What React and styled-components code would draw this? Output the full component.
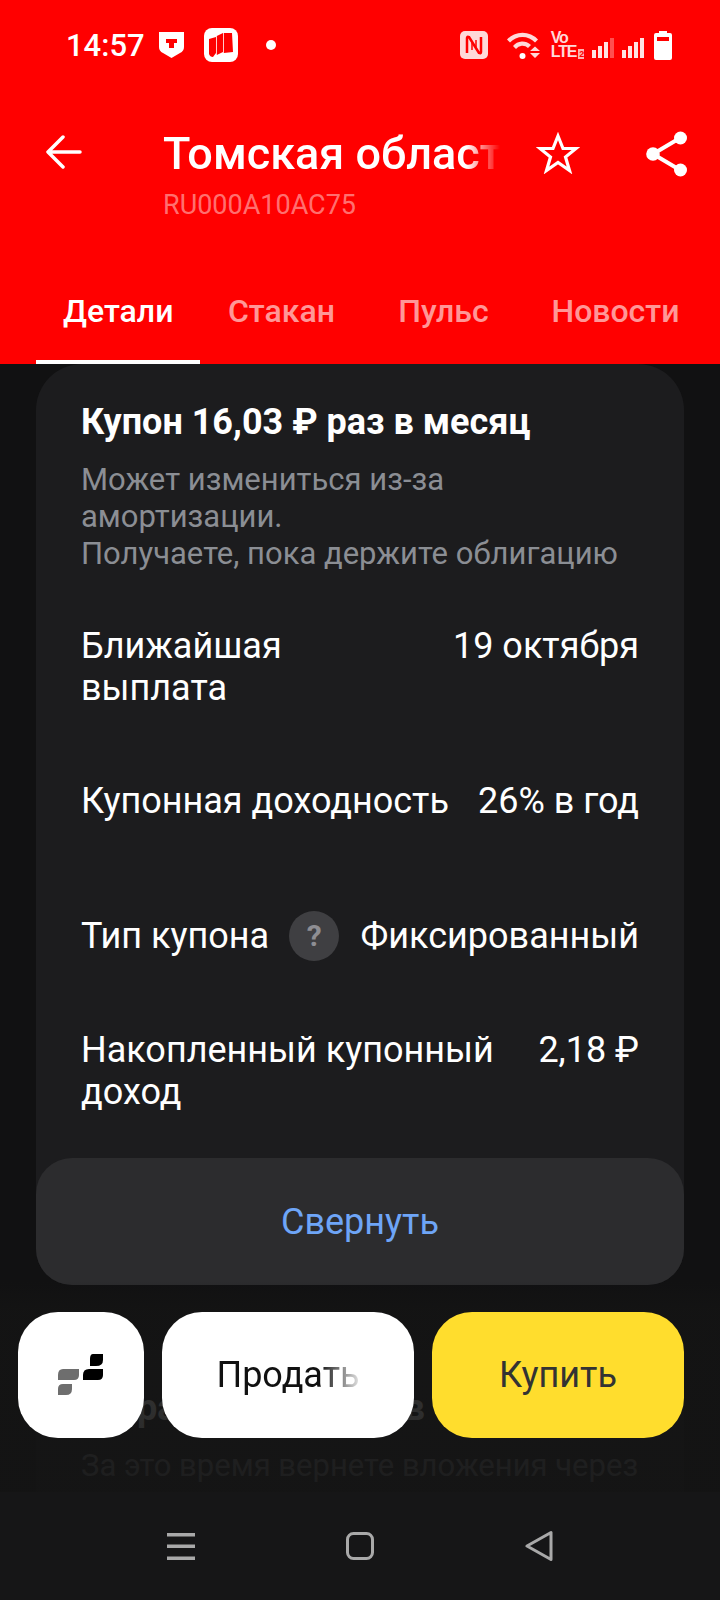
import React from "react";
import styled, { createGlobalStyle } from "styled-components";

const GlobalStyle = createGlobalStyle`
    html, body {
        margin: 0;
        padding: 0;
        background: #111112;
        font-family: Roboto, "Liberation Sans", sans-serif;
    }
`;

const Signal = ({ dim }) => (
    <svg width="22" height="20" viewBox="0 0 22 20" style={{ marginLeft: 8, marginTop: 6 }}>
        <rect x="0" y="12" width="4" height="8" fill="#ffe3e3" />
        <rect x="6" y="8" width="4" height="12" fill="#ffe3e3" />
        <rect x="12" y="4" width="4" height="16" fill="#ffe3e3" />
        <rect x="18" y="0" width="4" height="20" fill={dim ? "#ff5050" : "#ffe3e3"} />
    </svg>
);

const App = () => {
    return (
        <Page>
            <GlobalStyle />
            <Header>
                <StatusBar>
                    <Time>14:57</Time>
                    <svg width="25" height="26" viewBox="0 0 25 26" style={{ marginLeft: 14 }}>
                        <path d="M0 0H25V15Q25 19 21 21L12.5 26L4 21Q0 19 0 15Z" fill="#fff" />
                        <path d="M7 7H18V11H15V16H10V11H7Z" fill="#f00" />
                    </svg>
                    <svg width="34" height="34" viewBox="0 0 34 34" style={{ marginLeft: 20 }}>
                        <rect width="34" height="34" rx="8" fill="#fff" />
                        <path d="M5 11L12 9V25L9 29Q6 29 5 26ZM12.800 8L19 5V24L12.800 27ZM19.800 5H28L29 24L19.800 25Z" fill="#f00" />
                    </svg>
                    <StatusDot />
                    <StatusIcons>
                        <svg width="28" height="28" viewBox="0 0 28 28">
                            <rect width="28" height="28" rx="5" fill="#ffd9d9" />
                            <path d="M7 22V7Q7 5 9 6L19 22Q21 23 21 21V6" fill="none" stroke="#f00" strokeWidth="2.500" />
                            <path d="M12 12V19M16 9V16" stroke="#f00" strokeWidth="1.500" />
                        </svg>
                        <svg width="34" height="28" viewBox="0 0 34 28" style={{ marginLeft: 18 }}>
                            <path d="M1 8.500A21 21 0 0 1 32 8.500L29 11.500A17 17 0 0 0 4 11.500Z" fill="#ffd9d9" />
                            <path d="M7 15A12 12 0 0 1 25 14L22 17A8 8 0 0 0 10 18Z" fill="#ffd9d9" />
                            <circle cx="16.500" cy="25" r="3" fill="#fff" />
                            <path d="M24 20L29 15.500L34 20ZM24 22H34L29 27Z" fill="#ffd9d9" />
                        </svg>
                        <VoLte>
                            <VoLine>Vo</VoLine>
                            <VoLine>LTE<SimBox>2</SimBox></VoLine>
                        </VoLte>
                        <Signal dim />
                        <Signal />
                        <svg width="18" height="29" viewBox="0 0 18 29" style={{ marginLeft: 10 }}>
                            <path d="M5 0H13V2H16Q18 2 18 4V27Q18 29 16 29H2Q0 29 0 27V4Q0 2 2 2H5Z" fill="#fff" />
                            <rect x="3" y="6" width="12" height="4" fill="#f00" />
                        </svg>
                    </StatusIcons>
                </StatusBar>
                <Toolbar>
                    <svg width="36" height="36" viewBox="0 0 36 36" fill="none" stroke="#fff" strokeWidth="3.500" strokeLinecap="round" strokeLinejoin="round" style={{ marginTop: 3 }}>
                        <path d="M34 18H3M17 3L2 18L17 33" />
                    </svg>
                    <TitleBlock>
                        <Title>Томская область</Title>
                        <Isin>RU000A10AC75</Isin>
                    </TitleBlock>
                    <svg width="44" height="42" viewBox="0 0 44 42" fill="none" stroke="#fff" strokeWidth="3.200" strokeLinejoin="miter" style={{ marginLeft: 36, marginTop: 1 }}>
                        <path d="M22 4L27 16.500H40L29.500 25L33.500 38.500L22 30.500L10.500 38.500L14.500 25L4 16.500H17Z" />
                    </svg>
                    <svg width="42" height="46" viewBox="0 0 42 46" style={{ marginLeft: 66 }}>
                        <path d="M34 7L7 23L34 39" fill="none" stroke="#fff" strokeWidth="4" />
                        <circle cx="34.500" cy="7" r="6.500" fill="#fff" />
                        <circle cx="7" cy="23" r="6.800" fill="#fff" />
                        <circle cx="34.500" cy="39" r="6.500" fill="#fff" />
                    </svg>
                </Toolbar>
                <Tabs>
                    <Tab $active>Детали</Tab>
                    <Tab>Стакан</Tab>
                    <Tab>Пульс</Tab>
                    <Tab>Новости</Tab>
                </Tabs>
            </Header>

            <Content>
                <Card>
                    <CardBody>
                        <CardTitle>Купон 16,03 ₽ раз в месяц</CardTitle>
                        <Note>
                            Может измениться из-за<br />
                            амортизации.<br />
                            Получаете, пока держите облигацию
                        </Note>
                        <Rows>
                            <Row>
                                <span>Ближайшая<br />выплата</span>
                                <Value>19 октября</Value>
                            </Row>
                            <Row $tall>
                                <span>Купонная доходность</span>
                                <Value>26% в год</Value>
                            </Row>
                            <Row $center>
                                <Label>
                                    Тип купона
                                    <Help>?</Help>
                                </Label>
                                <Value>Фиксированный</Value>
                            </Row>
                            <Row>
                                <span>Накопленный купонный<br />доход</span>
                                <Value>2,18 ₽</Value>
                            </Row>
                        </Rows>
                    </CardBody>
                    <Collapse>Свернуть</Collapse>
                </Card>
                <NextCard>
                    <CardTitle>Дюрация 8 месяцев</CardTitle>
                    <Note>За это время вернете вложения через</Note>
                </NextCard>
                <Fade />
                <Actions>
                    <LogoButton>
                        <svg width="46" height="42" viewBox="0 0 46 42">
                            <path d="M35 0H45V6Q45 12 38 12H32V5Q32 0 35 0Z" fill="#000" />
                            <path d="M31 15H45V21Q45 26 40 26H25V21Q25 15 31 15Z" fill="#000" />
                            <path d="M5 15H21V21Q21 26 16 26H0V21Q0 15 5 15Z" fill="#6e6e6e" />
                            <path d="M5 30H14V35Q14 41 8 41H0V35Q0 30 5 30Z" fill="#6e6e6e" />
                        </svg>
                    </LogoButton>
                    <SellButton><FadeText>Продать</FadeText></SellButton>
                    <BuyButton>Купить</BuyButton>
                </Actions>
            </Content>

            <NavBar>
                <svg width="28" height="27" viewBox="0 0 28 27" fill="#a9a9a9">
                    <rect y="0" width="28" height="3.500" />
                    <rect y="11.500" width="28" height="3.500" />
                    <rect y="23.500" width="28" height="3.500" />
                </svg>
                <svg width="28" height="28" viewBox="0 0 28 28" fill="none" stroke="#a9a9a9" strokeWidth="3">
                    <rect x="1.500" y="1.500" width="25" height="25" rx="6" />
                </svg>
                <svg width="28" height="32" viewBox="0 0 28 32" fill="none" stroke="#a9a9a9" strokeWidth="3" strokeLinejoin="round">
                    <path d="M26 2.500V29.500L2 16Z" />
                </svg>
            </NavBar>
        </Page>
    );
};
export default App;

const Page = styled.div`
    display: flex;
    flex-direction: column;
    width: 720px;
    height: 1600px;
    overflow: hidden;
    background: #111112;
`;

const Header = styled.div`
    display: flex;
    flex-direction: column;
    height: 364px;
    background: #ff0000;
    color: #fff;
`;

const StatusBar = styled.div`
    display: flex;
    align-items: center;
    height: 90px;
    padding-left: 66px;
`;

const Time = styled.div`
    font-size: 31px;
    font-weight: 500;
`;

const StatusDot = styled.div`
    width: 10px;
    height: 10px;
    margin-left: 28px;
    border-radius: 50%;
    background: #fff;
`;

const StatusIcons = styled.div`
    display: flex;
    align-items: center;
    margin-left: auto;
    margin-right: 48px;
`;

const VoLte = styled.div`
    display: flex;
    flex-direction: column;
    margin-left: 11px;
    color: #ffd9d9;
    font-family: "Liberation Sans", sans-serif;
    font-size: 16px;
    font-weight: 700;
    line-height: 14px;
`;

const VoLine = styled.div`
    display: flex;
    align-items: flex-end;
    letter-spacing: -1.2px;
`;

const SimBox = styled.span`
    margin-left: 2px;
    padding: 0 1px;
    background: #ffb3b3;
    color: #f00;
    font-size: 9px;
    line-height: 10px;
`;

const Toolbar = styled.div`
    display: flex;
    align-items: flex-start;
    height: 194px;
    padding: 41px 0 0 46px;
    box-sizing: border-box;
`;

const TitleBlock = styled.div`
    display: flex;
    flex-direction: column;
    width: 337px;
    margin-left: 81px;
    margin-top: -2px;
    overflow: hidden;
`;

const Title = styled.div`
    font-size: 45px;
    font-weight: 500;
    line-height: 50px;
    white-space: nowrap;
    mask-image: linear-gradient(to right, #000 90%, transparent 100%);
`;

const Isin = styled.div`
    margin-top: 10px;
    font-size: 27px;
    line-height: 32px;
    color: rgba(255, 255, 255, 0.45);
`;

const Tabs = styled.div`
    display: flex;
    height: 80px;
    padding-left: 36px;
`;

const Tab = styled.div`
    display: flex;
    justify-content: center;
    box-sizing: border-box;
    min-width: 162px;
    padding: 7px 27px 0;
    font-size: 32px;
    font-weight: 500;
    line-height: 40px;
    white-space: nowrap;
    color: ${(p) => (p.$active ? "#fff" : "rgba(255, 255, 255, 0.6)")};
    border-bottom: 4px solid ${(p) => (p.$active ? "#fff" : "transparent")};
`;

const Content = styled.div`
    position: relative;
    flex: 1;
    min-height: 0;
    overflow: hidden;
    padding: 0 36px;
`;

const Card = styled.div`
    display: flex;
    flex-direction: column;
    height: 921px;
    border-radius: 46px 46px 36px 36px;
    background: #1c1c1e;
`;

const CardBody = styled.div`
    flex: 1;
    padding: 39px 45px 0;
    color: #fff;
`;

const CardTitle = styled.div`
    font-size: 36px;
    font-weight: 700;
    line-height: 38px;
    color: #fff;
`;

const Note = styled.div`
    margin-top: 20px;
    font-size: 31px;
    line-height: 37px;
    color: #8b8e94;
`;

const Rows = styled.div`
    display: flex;
    flex-direction: column;
    gap: 71px;
    margin-top: 53px;
`;

const Row = styled.div`
    display: flex;
    justify-content: space-between;
    align-items: ${(p) => (p.$center ? "center" : "flex-start")};
    min-height: ${(p) => (p.$tall ? "63px" : "42px")};
    font-size: 36px;
    line-height: 42px;
    color: #fff;
`;

const Value = styled.span`
    white-space: nowrap;
`;

const Label = styled.span`
    display: flex;
    align-items: center;
    gap: 20px;
`;

const Help = styled.span`
    display: flex;
    align-items: center;
    justify-content: center;
    width: 50px;
    height: 50px;
    margin: -3px 0;
    border-radius: 50%;
    background: #3f3f42;
    color: #8e8e93;
    font-size: 30px;
    font-weight: 700;
`;

const Collapse = styled.div`
    display: flex;
    align-items: center;
    justify-content: center;
    height: 127px;
    border-radius: 36px;
    background: #2c2c2e;
    color: #6ea5f7;
    font-size: 36px;
`;

const NextCard = styled.div`
    margin-top: 65px;
    padding: 39px 45px 0;
    height: 400px;
    border-radius: 46px;
    background: #1c1c1e;
`;

const Fade = styled.div`
    position: absolute;
    left: 0;
    right: 0;
    bottom: 0;
    height: 210px;
    background: linear-gradient(to bottom, rgba(20, 20, 20, 0) 0, rgba(20, 20, 20, 0.85) 30px, rgba(20, 20, 20, 0.92) 100%);
`;

const Actions = styled.div`
    position: absolute;
    left: 18px;
    right: 36px;
    bottom: 54px;
    display: flex;
    gap: 18px;
    height: 126px;
`;

const ActionButton = styled.div`
    display: flex;
    align-items: center;
    justify-content: center;
    border-radius: 40px;
    background: #fff;
    color: #111;
    font-size: 36px;
`;

const LogoButton = styled(ActionButton)`
    width: 126px;
`;

const SellButton = styled(ActionButton)`
    flex: 1;
`;

const BuyButton = styled(ActionButton)`
    flex: 1;
    background: #ffdd2d;
    color: #333;
`;

const FadeText = styled.span`
    mask-image: linear-gradient(to right, #000 72%, rgba(0, 0, 0, 0.1) 100%);
`;

const NavBar = styled.div`
    display: grid;
    grid-template-columns: repeat(3, 28px);
    justify-content: center;
    column-gap: 151px;
    align-items: center;
    height: 108px;
    box-sizing: border-box;
    background: #161617;
`;
